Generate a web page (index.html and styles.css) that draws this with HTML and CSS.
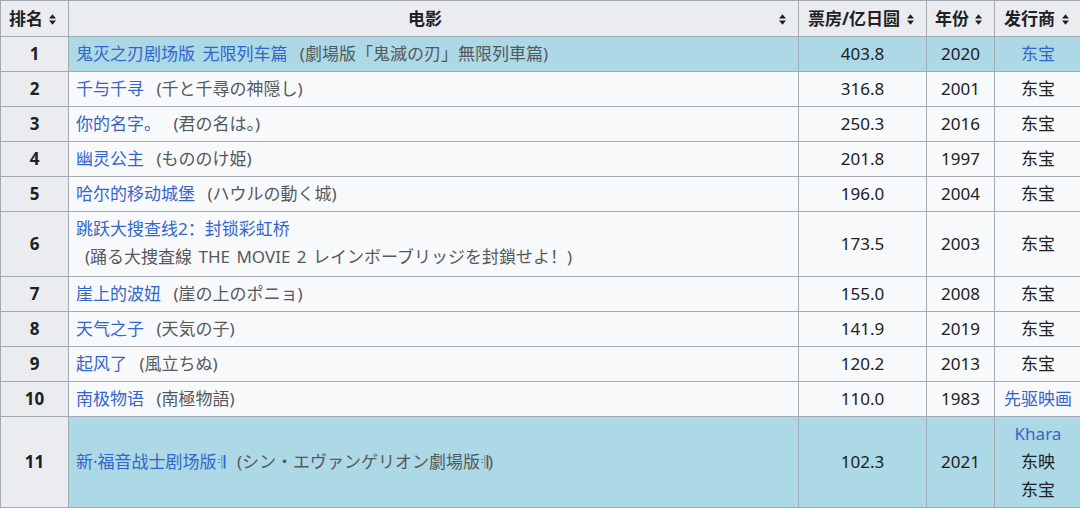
FILE: index.html
```html
<!DOCTYPE html>
<html lang="zh-CN">
<head>
<meta charset="utf-8">
<link rel="stylesheet" href="styles.css">
</head>
<body>
<table class="wikitable">
  <thead>
    <tr>
      <th class="sort c-rank">排名<svg class="sort-ico" viewBox="0 0 7 11" width="7" height="11"><path d="M0 4.6 L3.5 0.2 L7 4.6 Z M0 6.4 L3.5 10.8 L7 6.4 Z"/></svg></th>
      <th class="sort c-film">电影<svg class="sort-ico" viewBox="0 0 7 11" width="7" height="11"><path d="M0 4.6 L3.5 0.2 L7 4.6 Z M0 6.4 L3.5 10.8 L7 6.4 Z"/></svg></th>
      <th class="sort c-gross">票房/亿日圆<svg class="sort-ico" viewBox="0 0 7 11" width="7" height="11"><path d="M0 4.6 L3.5 0.2 L7 4.6 Z M0 6.4 L3.5 10.8 L7 6.4 Z"/></svg></th>
      <th class="sort c-year">年份<svg class="sort-ico" viewBox="0 0 7 11" width="7" height="11"><path d="M0 4.6 L3.5 0.2 L7 4.6 Z M0 6.4 L3.5 10.8 L7 6.4 Z"/></svg></th>
      <th class="sort c-dist">发行商<svg class="sort-ico" viewBox="0 0 7 11" width="7" height="11"><path d="M0 4.6 L3.5 0.2 L7 4.6 Z M0 6.4 L3.5 10.8 L7 6.4 Z"/></svg></th>
    </tr>
  </thead>
  <tbody>
    <tr class="hl">
      <th>1</th>
      <td class="film"><a>鬼灭之刃剧场版 无限列车篇</a> <span class="orig">(劇場版「鬼滅の刃」無限列車篇)</span></td>
      <td class="c">403.8</td><td class="c">2020</td><td class="c"><a>东宝</a></td>
    </tr>
    <tr>
      <th>2</th>
      <td class="film"><a>千与千寻</a> <span class="orig">(千と千尋の神隠し)</span></td>
      <td class="c">316.8</td><td class="c">2001</td><td class="c">东宝</td>
    </tr>
    <tr>
      <th>3</th>
      <td class="film"><a>你的名字。</a> <span class="orig">(君の名は。)</span></td>
      <td class="c">250.3</td><td class="c">2016</td><td class="c">东宝</td>
    </tr>
    <tr>
      <th>4</th>
      <td class="film"><a>幽灵公主</a> <span class="orig">(もののけ姫)</span></td>
      <td class="c">201.8</td><td class="c">1997</td><td class="c">东宝</td>
    </tr>
    <tr>
      <th>5</th>
      <td class="film"><a>哈尔的移动城堡</a> <span class="orig">(ハウルの動く城)</span></td>
      <td class="c">196.0</td><td class="c">2004</td><td class="c">东宝</td>
    </tr>
    <tr>
      <th>6</th>
      <td class="film"><a>跳跃大搜查线2：封锁彩虹桥</a> <span class="orig wrap">(踊る大捜査線 THE MOVIE 2 レインボーブリッジを封鎖せよ！)</span></td>
      <td class="c">173.5</td><td class="c">2003</td><td class="c">东宝</td>
    </tr>
    <tr>
      <th>7</th>
      <td class="film"><a>崖上的波妞</a> <span class="orig">(崖の上のポニョ)</span></td>
      <td class="c">155.0</td><td class="c">2008</td><td class="c">东宝</td>
    </tr>
    <tr>
      <th>8</th>
      <td class="film"><a>天气之子</a> <span class="orig">(天気の子)</span></td>
      <td class="c">141.9</td><td class="c">2019</td><td class="c">东宝</td>
    </tr>
    <tr>
      <th>9</th>
      <td class="film"><a>起风了</a> <span class="orig">(風立ちぬ)</span></td>
      <td class="c">120.2</td><td class="c">2013</td><td class="c">东宝</td>
    </tr>
    <tr>
      <th>10</th>
      <td class="film"><a>南极物语</a> <span class="orig">(南極物語)</span></td>
      <td class="c">110.0</td><td class="c">1983</td><td class="c"><a>先驱映画</a></td>
    </tr>
    <tr class="hl">
      <th>11</th>
      <td class="film"><a>新·福音战士剧场版𝄇</a> <span class="orig">(シン・エヴァンゲリオン劇場版𝄇)</span></td>
      <td class="c">102.3</td><td class="c">2021</td><td class="c"><a>Khara</a><br>东映<br>东宝</td>
    </tr>
  </tbody>
</table>
</body>
</html>
```

FILE: styles.css
```css
html, body {
  margin: 0;
  padding: 0;
  background: #ffffff;
}
body {
  font-family: "Noto Sans", "Noto Sans CJK SC", sans-serif;
  font-size: 17px;
  color: #202122;
}
.wikitable {
  border-collapse: collapse;
  background: #f8f9fa;
  border: 1px solid #a2a9b1;
  width: 1082px;
  table-layout: fixed;
}
.wikitable th,
.wikitable td {
  border: 1px solid #a2a9b1;
  padding: 3px 7px;
  line-height: 28px;
}
.wikitable th {
  background: #eaecf0;
  font-weight: bold;
  text-align: center;
}
.wikitable thead th {
  padding-right: 24px;
  line-height: 29px;
  position: relative;
  white-space: nowrap;
}
.sort-ico {
  position: absolute;
  right: 12px;
  top: 50%;
  margin-top: -5px;
  fill: #202122;
}
.c-rank { width: 68px; box-sizing: border-box; }
.c-film { width: 730px; box-sizing: border-box; }
.c-gross { width: 128px; box-sizing: border-box; }
.c-year { width: 68px; box-sizing: border-box; }
.wikitable tbody th {
  background: #eaecf0;
}
.hl td {
  background: #add8e6;
}
.film {
  text-align: left;
}
.film a {
  word-spacing: 3px;
}
.c {
  text-align: center;
}
a {
  color: #3366cc;
  text-decoration: none;
}
.orig {
  display: inline-block;
  padding-left: 8px;
  color: #54595d;
}
.orig.wrap {
  display: block;
  padding-left: 9px;
  padding-bottom: 2px;
  word-spacing: 2px;
}
```
